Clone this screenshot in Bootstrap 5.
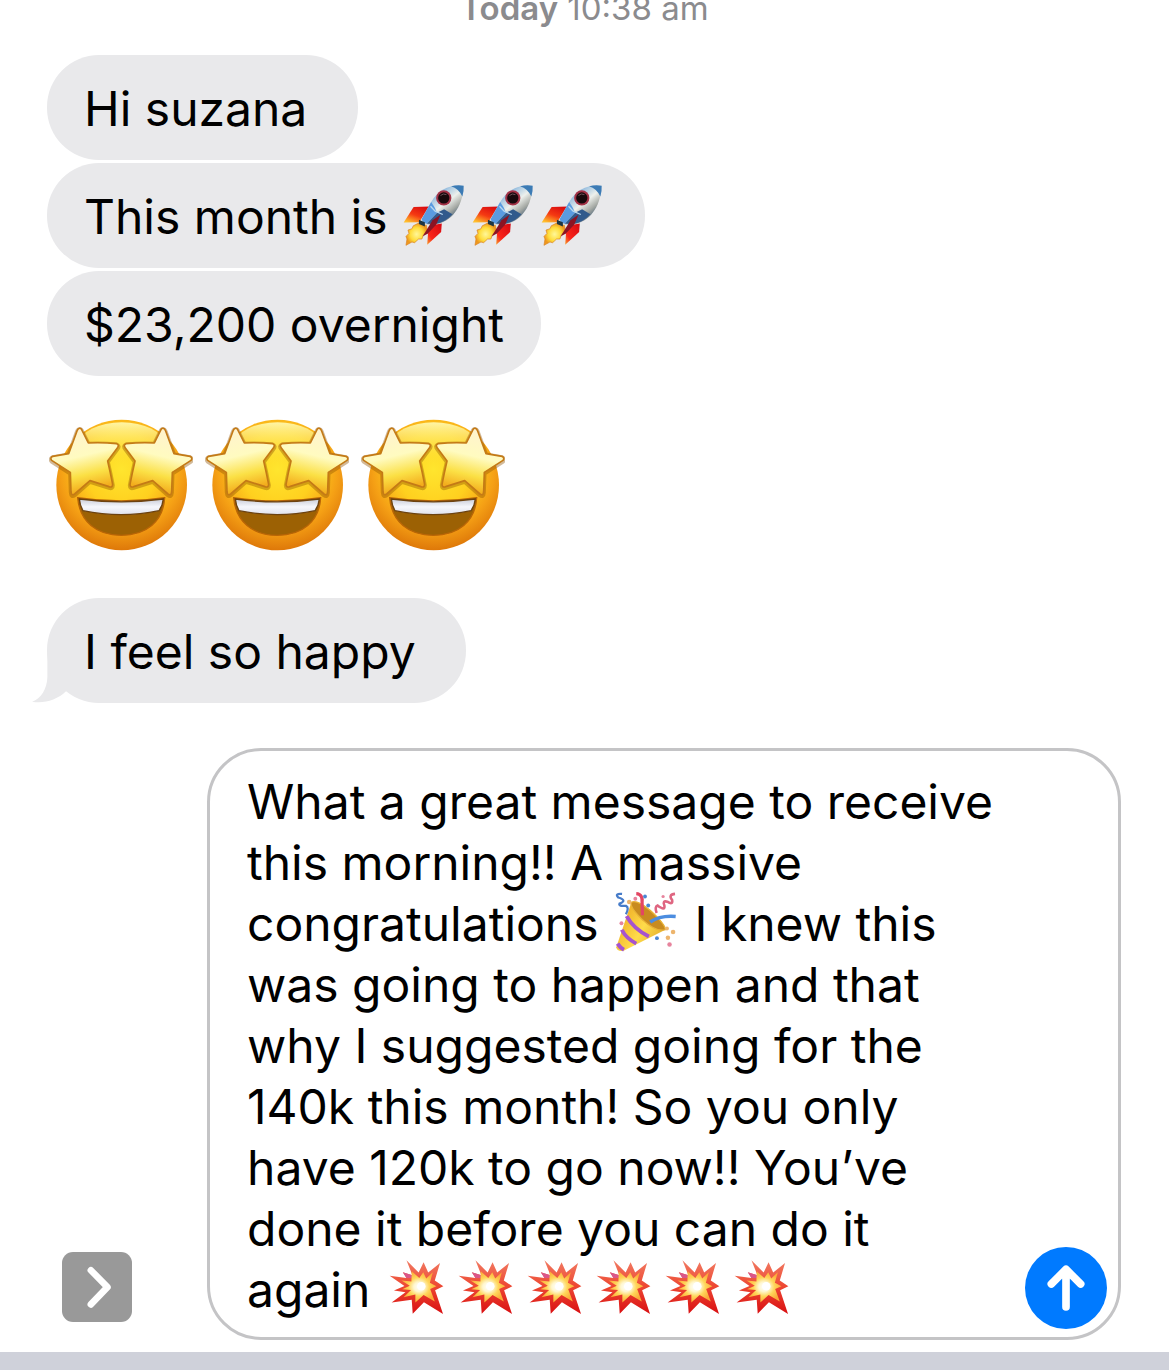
<!DOCTYPE html>
<html lang="en">
<head>
<meta charset="utf-8">
<meta name="viewport" content="width=device-width, initial-scale=1">
<title>Messages</title>
<link href="https://cdn.jsdelivr.net/npm/bootstrap@5.3.0/dist/css/bootstrap.min.css" rel="stylesheet">
<style>
  body { font-family: Inter, "Liberation Sans", sans-serif; font-size: 48px; line-height: 61px; color: #000; background: #fff; overflow: hidden; }
  .stamp { font-size: 33px; line-height: 40px; color: #8b8b8e; margin-top: -12px; margin-bottom: 27px; }
  .thread { padding-left: 47px; padding-right: 48px; gap: 3px; }
  .bubble { background: #e9e9eb; border-radius: 52px; padding: 23px 37px 21px; }
  .tail { left: -16px; bottom: 0; width: 40px; height: 53px; }
  .big-emoji { gap: 12px; margin: 40px 0 44px 2px; }
  .big-emoji svg { width: 144px; height: 132px; }
  .inline-emoji { width: 62px; height: 62px; margin: -10px 5px -10px 2px; vertical-align: -2px; }
  .burst { width: 56px; height: 56px; margin: -10px 8px -10px 5px; vertical-align: 2px; }
  .entry-row { padding: 45px 48px 12px 62px; gap: 75px; }
  .apps-btn { width: 70px; height: 70px; border-radius: 11px; background: #999; margin-bottom: 18px; }
  .entry-box { border: 3px solid #c4c4c6; border-radius: 54px; padding: 20px 11px 8px 37px; }
  .entry-text { outline: 0; margin-bottom: 9px; white-space: nowrap; }
  .send-btn { width: 82px; height: 82px; background: #007aff; }
  .keyboard { background: #cfd1da; min-height: 18px; }
</style>
<script src="https://cdn.jsdelivr.net/npm/bootstrap@5.3.0/dist/js/bootstrap.bundle.min.js"></script>
</head>
<body>
<svg width="0" height="0" class="position-absolute" aria-hidden="true">
  <defs>
    <radialGradient id="faceFill" cx=".5" cy=".38" r=".62"><stop offset="0" stop-color="#ffe52e"/><stop offset=".45" stop-color="#ffd01f"/><stop offset=".75" stop-color="#f5a015"/><stop offset="1" stop-color="#de7809"/></radialGradient>
    <linearGradient id="shine" x2="0" y2="1"><stop offset="0" stop-color="#fff5a5"/><stop offset="1" stop-color="#ffe635" stop-opacity="0"/></linearGradient>
    <linearGradient id="starFill" x2=".25" y2="1"><stop offset="0" stop-color="#fff0d2"/><stop offset=".5" stop-color="#fffbc0"/><stop offset=".78" stop-color="#fbe045"/><stop offset="1" stop-color="#f3ad1d"/></linearGradient>
    <linearGradient id="teeth" x2="0" y2="1"><stop offset="0" stop-color="#c9ccd8"/><stop offset=".5" stop-color="#f6f7fc"/><stop offset="1" stop-color="#dfe1ec"/></linearGradient>
    <linearGradient id="hull" x1=".2" y1=".1" x2=".8" y2=".8"><stop offset="0" stop-color="#4387cd"/><stop offset=".3" stop-color="#a9c9e2"/><stop offset=".55" stop-color="#edf0ec"/><stop offset=".8" stop-color="#a5a9a4"/><stop offset="1" stop-color="#4f6679"/></linearGradient>
    <linearGradient id="finA" x1=".8" y1="0" x2=".2" y2="1"><stop offset="0" stop-color="#d80a10"/><stop offset=".55" stop-color="#f53a12"/><stop offset="1" stop-color="#ffc02d"/></linearGradient>
    <linearGradient id="finB" x1="1" y1="0" x2="0" y2="1"><stop offset="0" stop-color="#d40811"/><stop offset=".7" stop-color="#fa251a"/><stop offset="1" stop-color="#f8a12b"/></linearGradient>
    <radialGradient id="flame"><stop offset="0" stop-color="#fff799"/><stop offset=".6" stop-color="#ffdd3b"/><stop offset="1" stop-color="#ee971d"/></radialGradient>
    <linearGradient id="cone" x1="0" y1=".3" x2="1" y2=".9"><stop offset="0" stop-color="#eda822"/><stop offset=".5" stop-color="#ffdc4a"/><stop offset="1" stop-color="#dba126"/></linearGradient>
    <linearGradient id="blast" x2="0" y2="1"><stop offset="0" stop-color="#f17b63"/><stop offset=".45" stop-color="#ee4b35"/><stop offset="1" stop-color="#d90f12"/></linearGradient>
    <radialGradient id="blastCore"><stop offset="0" stop-color="#fff"/><stop offset=".3" stop-color="#fff7d0"/><stop offset=".6" stop-color="#ffd65a"/><stop offset="1" stop-color="#fbab38"/></radialGradient>
    <path id="star" d="M118 68Q123 66 127 76L145 112Q187 110 230 114Q239 118 232 127L203 166Q211 200 218 236Q218 247 207 243L150 225L104 265Q94 272 93 258L91 200L35 164Q29 157 38 152L86 144L111 76Q114 68 118 68Z"/>
  </defs>
  <symbol id="starstruck" viewBox="27 40 432 396">
    <circle cx="245" cy="238" r="196" fill="url(#faceFill)"/>
    <ellipse cx="245" cy="112" rx="125" ry="62" fill="url(#shine)"/>
    <path d="M113 276Q244 296 374 276C370 348 318 389 244 389S119 348 113 276Z" fill="#9c6104" stroke="#b96506" stroke-width="4"/>
    <path d="M118 280Q244 297 370 280Q368 300 357 315Q244 339 129 315Q120 300 118 280Z" fill="url(#teeth)" stroke="#6c4210" stroke-width="4"/>
    <g stroke-linejoin="round">
      <g fill="none" stroke="#8f5200" stroke-opacity=".4" stroke-width="13"><use href="#star" y="3"/><use href="#star" transform="translate(488 3) scale(-1 1)"/></g>
      <g fill="url(#starFill)" stroke="#c47a16" stroke-width="5"><use href="#star"/><use href="#star" transform="translate(488) scale(-1 1)"/></g>
    </g>
  </symbol>
  <symbol id="rocket" viewBox="45 45 187 187">
    <path d="M126 113L77 114L47 161L94 160Z" fill="url(#finA)"/>
    <path d="M92 163L76 171L72 180L60 184L63 194L54 203L57 211L54 230L72 220L80 222L92 211L102 211L107 197L118 186L116 170Z" fill="url(#flame)" stroke="#d98222" stroke-width="2"/>
    <path d="M162 164L160 190L118 228L121 186L140 168Z" fill="url(#finB)"/>
    <path d="M228 50C185 46 152 62 130 99L100 151Q100 163 116 167L141 167C190 158 224 119 228 50Z" fill="url(#hull)"/>
    <path d="M228 50Q209 46 190 52Q213 59 224 83Q229 67 228 50Z" fill="#3c7bb5"/>
    <path d="M130 99L101 151Q104 161 117 165L148 132Q140 112 130 99Z" fill="#5a9be0"/>
    <path d="M141 166Q174 159 194 136L169 121L148 132L117 165Z" fill="#315a8c"/>
    <path d="M128 112L142 127L165 137" fill="none" stroke="#b8d8ee" stroke-width="4"/>
    <path d="M158 138L134 154L104 203L120 194L145 168Z" fill="#8b1424"/>
    <path d="M93 153L111 160L111 173L93 166Z" fill="#1c3543"/>
    <circle cx="168" cy="87" r="23" fill="#a33246"/><circle cx="168" cy="87" r="17" fill="#18090c"/><path d="M158 80q8-8 18-3" stroke="#695159" stroke-width="3" fill="none"/>
  </symbol>
  <symbol id="party" viewBox="45 33 192 192">
    <path d="M99 68L52 207Q55 222 75 218L204 153Q201 130 158 91Q116 57 99 68Z" fill="url(#cone)"/>
    <path d="M99 68Q115 59 158 94Q205 137 204 153Q176 161 132 121Q92 82 99 68Z" fill="#c88b20" stroke="#e8b237" stroke-width="4"/>
    <g fill="none" stroke="#a653cf" stroke-width="12"><path d="M84 111Q105 150 153 174"/><path d="M69 153Q82 179 114 196"/><path d="M56 196Q64 209 76 215"/></g>
    <path d="M114 41Q135 42 132 70L133 108" fill="none" stroke="#e34663" stroke-width="10"/>
    <path d="M157 129Q188 108 236 112" fill="none" stroke="#4c8de0" stroke-width="11"/>
    <path d="M70 42Q46 40 58 53Q88 62 62 72Q58 81 82 79Q93 84 82 105" fill="none" stroke="#477cc9" stroke-width="7"/>
    <path d="M177 101Q170 81 180 78Q204 96 201 78Q194 62 210 66Q228 77 225 61Q212 44 234 42" fill="none" stroke="#df6681" stroke-width="8"/>
    <g fill="#4a86d3"><circle cx="141" cy="50" r="6"/><circle cx="151" cy="78" r="6"/><circle cx="178" cy="179" r="6"/></g>
    <g fill="#e7849d"><circle cx="111" cy="57" r="6"/><circle cx="197" cy="50" r="5"/><circle cx="68" cy="133" r="6"/><circle cx="217" cy="199" r="7"/></g>
    <g fill="#edb56d"><circle cx="92" cy="67" r="7"/><circle cx="209" cy="149" r="6"/><circle cx="228" cy="160" r="7"/><circle cx="212" cy="178" r="7"/></g>
  </symbol>
  <symbol id="boom" viewBox="28 26 170 170">
    <path d="M81 30L118 67L133 36L147 67L183 38L167 91L193 109L168 121L192 193L134 157L100 192L97 150L36 158L78 127L43 122L75 108L30 77L81 84L70 66L99 75Z" fill="url(#blast)"/>
    <path d="M70 66L99 75L97 84L81 84Z" fill="#da5689"/>
    <path d="M97 63L120 84L132 66L141 85L161 66L152 98L172 109L153 117L167 155L133 135L108 158L108 134L72 142L95 120L68 118L91 107L66 91L96 94Z" fill="url(#blastCore)"/>
    <circle cx="126" cy="109" r="13" fill="#fff"/>
  </symbol>
</svg>

<div class="d-flex flex-column min-vh-100">
  <header class="stamp text-center"><span class="fw-semibold">Today</span> 10:38 am</header>
  <main>
    <section class="thread d-flex flex-column align-items-start" aria-label="Conversation">
      <div class="bubble">Hi suzana&nbsp;</div>
      <div class="bubble">This month is <svg class="inline-emoji"><use href="#rocket"/></svg><svg class="inline-emoji"><use href="#rocket"/></svg><svg class="inline-emoji"><use href="#rocket"/></svg></div>
      <div class="bubble">$23,200 overnight</div>
      <div class="big-emoji d-flex">
        <svg><use href="#starstruck"/></svg>
        <svg><use href="#starstruck"/></svg>
        <svg><use href="#starstruck"/></svg>
      </div>
      <div class="bubble position-relative">I feel so happy&nbsp;<svg class="tail position-absolute" viewBox="32 180 120 160" aria-hidden="true"><path d="M81 180V262C80 297 62 327 35 336C68 343 110 332 138 304L152 250Z" fill="#e9e9eb"/></svg></div>
    </section>
    <form class="entry-row d-flex align-items-end">
      <button type="button" class="apps-btn btn p-0 border-0 flex-shrink-0" aria-label="Show apps">
        <svg class="d-block w-100 h-100" viewBox="66 67 211 211"><path d="M153 122L203 173L153 225" fill="none" stroke="#fff" stroke-width="20" stroke-linecap="round" stroke-linejoin="round"/></svg>
      </button>
      <div class="entry-box flex-grow-1 d-flex align-items-end">
        <div class="entry-text flex-grow-1" contenteditable="true" role="textbox" aria-multiline="true" aria-label="Message">What a great message to receive<br>this morning!! A massive<br>congratulations <svg class="inline-emoji"><use href="#party"/></svg> I knew this<br>was going to happen and that<br>why I suggested going for the<br>140k this month! So you only<br>have 120k to go now!! You’ve<br>done it before you can do it<br>again <svg class="inline-emoji burst"><use href="#boom"/></svg><svg class="inline-emoji burst"><use href="#boom"/></svg><svg class="inline-emoji burst"><use href="#boom"/></svg><svg class="inline-emoji burst"><use href="#boom"/></svg><svg class="inline-emoji burst"><use href="#boom"/></svg><svg class="inline-emoji burst"><use href="#boom"/></svg></div>
        <button type="submit" class="send-btn btn rounded-circle p-0 border-0 flex-shrink-0" aria-label="Send">
          <svg class="d-block w-100 h-100" viewBox="75 51 246 246"><path d="M198 231V120M154 162L198 118L242 162" fill="none" stroke="#fff" stroke-width="23" stroke-linecap="round" stroke-linejoin="round"/></svg>
        </button>
      </div>
    </form>
  </main>
  <div class="keyboard flex-grow-1"></div>
</div>
</body>
</html>
